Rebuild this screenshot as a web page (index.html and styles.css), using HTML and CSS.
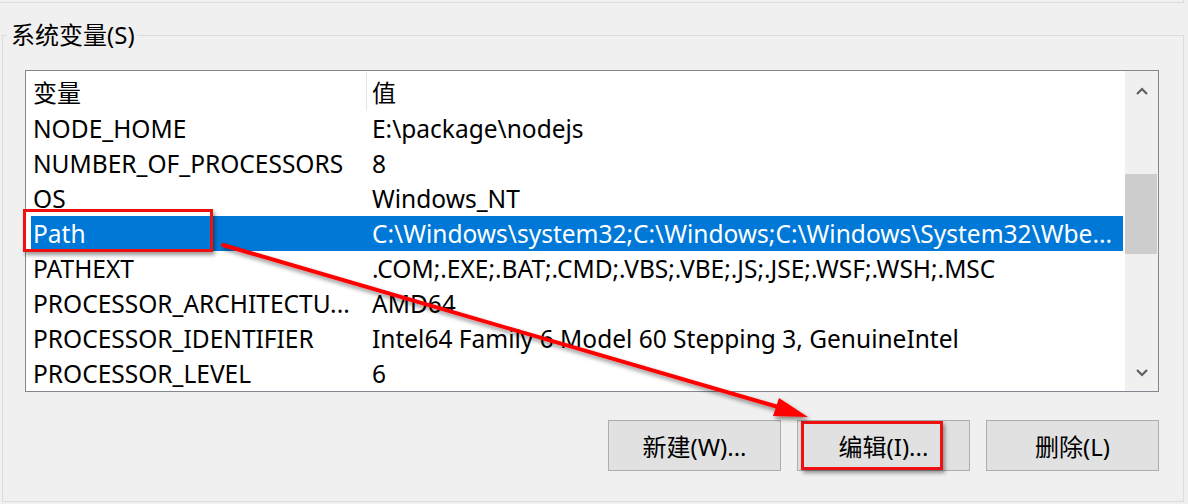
FILE: index.html
```html
<!DOCTYPE html>
<html lang="zh-CN">
<head>
<meta charset="utf-8">
<title>系统变量</title>
<link rel="stylesheet" href="styles.css">
</head>
<body>
<div class="page">
  <div class="prev-group"></div>
  <div class="group">
    <div class="group-title">系统变量(S)</div>
    <div class="listbox">
      <div class="list-content">
        <div class="list-header">
          <div class="hcol hcol-name">变量</div>
          <div class="hcol hcol-value">值</div>
        </div>
        <div class="row"><div class="cell cell-name">NODE_HOME</div><div class="cell cell-value">E:\package\nodejs</div></div>
        <div class="row"><div class="cell cell-name">NUMBER_OF_PROCESSORS</div><div class="cell cell-value">8</div></div>
        <div class="row"><div class="cell cell-name">OS</div><div class="cell cell-value">Windows_NT</div></div>
        <div class="row selected"><div class="cell cell-name">Path</div><div class="cell cell-value">C:\Windows\system32;C:\Windows;C:\Windows\System32\Wbe...</div></div>
        <div class="row"><div class="cell cell-name">PATHEXT</div><div class="cell cell-value">.COM;.EXE;.BAT;.CMD;.VBS;.VBE;.JS;.JSE;.WSF;.WSH;.MSC</div></div>
        <div class="row"><div class="cell cell-name">PROCESSOR_ARCHITECTU...</div><div class="cell cell-value">AMD64</div></div>
        <div class="row"><div class="cell cell-name">PROCESSOR_IDENTIFIER</div><div class="cell cell-value">Intel64 Family 6 Model 60 Stepping 3, GenuineIntel</div></div>
        <div class="row"><div class="cell cell-name">PROCESSOR_LEVEL</div><div class="cell cell-value">6</div></div>
      </div>
      <div class="scrollbar">
        <div class="sb-btn sb-up">
          <svg width="12" height="8" viewBox="0 0 12 8"><path d="M1 7 L6 2 L11 7" fill="none" stroke="#606060" stroke-width="2.2"/></svg>
        </div>
        <div class="sb-track"><div class="sb-thumb"></div></div>
        <div class="sb-btn sb-down">
          <svg width="12" height="8" viewBox="0 0 12 8"><path d="M1 1 L6 6 L11 1" fill="none" stroke="#606060" stroke-width="2.2"/></svg>
        </div>
      </div>
    </div>
    <div class="buttons">
      <div class="btn">新建(W)...</div>
      <div class="btn">编辑(I)...</div>
      <div class="btn">删除(L)</div>
    </div>
  </div>

  <div class="mark mark-path"></div>
  <div class="mark mark-edit"></div>
  <svg class="arrow" width="1188" height="504" viewBox="0 0 1188 504">
    <defs>
      <filter id="sh" x="-10%" y="-10%" width="120%" height="130%">
        <feDropShadow dx="2" dy="3" stdDeviation="2" flood-color="#000" flood-opacity="0.45"/>
      </filter>
    </defs>
    <g filter="url(#sh)">
      <line x1="223" y1="245" x2="785" y2="409" stroke="#ff0000" stroke-width="4" stroke-linecap="round"/>
      <polygon points="808,417 779,398 773,416" fill="#ff0000"/>
    </g>
  </svg>
</div>
</body>
</html>
```

FILE: styles.css
```css
html, body {
  margin: 0;
  padding: 0;
  background: #f0f0f0;
}
body {
  width: 1188px;
  height: 504px;
  overflow: hidden;
  font-family: "Noto Sans", "Noto Sans CJK SC", sans-serif;
  font-size: 24.5px;
  color: #000;
}
.page {
  position: relative;
  width: 1188px;
  height: 504px;
}
.prev-group {
  width: 1183px;
  height: 2px;
  border-bottom: 1px solid #dcdcdc;
  border-right: 1px solid #dcdcdc;
}
.group {
  box-sizing: border-box;
  margin: 32px 0 0 2px;
  width: 1182px;
  height: 467px;
  border: 1px solid #dcdcdc;
}
.group-title {
  width: fit-content;
  margin: -13px 0 0 4px;
  padding: 0 2px 0 4px;
  background: #f0f0f0;
  line-height: 24px;
  font-size: 24px;
  white-space: nowrap;
}
.listbox {
  box-sizing: border-box;
  margin: 23px 0 0 22px;
  width: 1134px;
  height: 322px;
  border: 1px solid #828790;
  background: #fff;
  display: flex;
  overflow: hidden;
}
.list-content {
  flex: 1;
  overflow: hidden;
}
.list-header {
  display: flex;
  height: 40px;
  box-sizing: border-box;
  padding-top: 4px;
  font-size: 24px;
}
.hcol {
  line-height: 36px;
  white-space: nowrap;
}
.hcol-name {
  box-sizing: border-box;
  width: 341px;
  padding-left: 7px;
  border-right: 1px solid #e5e5e5;
  margin-top: -3px;
  height: 39px;
  padding-top: 3px;
}
.hcol-value {
  padding-left: 5px;
}
.row {
  display: flex;
  margin-left: 5px;
  width: 1092px;
  height: 35px;
  line-height: 35px;
}
.row.selected {
  background: #0078d7;
  color: #fff;
}
.cell {
  white-space: nowrap;
  overflow: hidden;
}
.cell-name {
  box-sizing: border-box;
  width: 335px;
  padding-left: 2px;
}
.cell-value {
  flex: 1;
  padding-left: 6px;
}
.scrollbar {
  width: 33px;
  background: #f0f0f0;
  display: flex;
  flex-direction: column;
}
.sb-btn {
  display: flex;
  align-items: center;
  justify-content: center;
}
.sb-up {
  height: 40px;
}
.sb-down {
  height: 36px;
}
.sb-track {
  flex: 1;
}
.sb-thumb {
  margin-top: 63px;
  width: 32px;
  height: 80px;
  background: #cdcdcd;
}
.buttons {
  margin: 28px 0 0 22px;
  width: 1134px;
  display: flex;
  justify-content: flex-end;
  gap: 16px;
  font-size: 24px;
}
.btn {
  box-sizing: border-box;
  width: 173px;
  height: 51px;
  background: #e1e1e1;
  border: 1px solid #adadad;
  display: flex;
  align-items: center;
  justify-content: center;
  white-space: nowrap;
}
.mark {
  position: absolute;
  box-sizing: border-box;
  border: 3px solid #ee1111;
  box-shadow: 2px 3px 4px rgba(0, 0, 0, 0.4);
}
.mark-path {
  left: 23px;
  top: 209px;
  width: 190px;
  height: 43px;
}
.mark-edit {
  left: 801px;
  top: 421px;
  width: 142px;
  height: 49px;
}
.arrow {
  position: absolute;
  left: 0;
  top: 0;
  pointer-events: none;
}
```
